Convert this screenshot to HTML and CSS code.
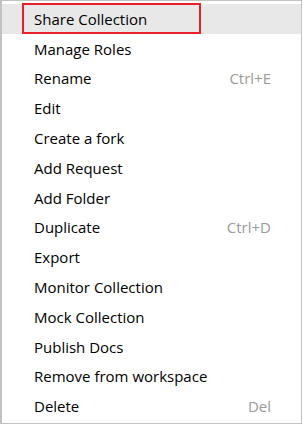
FILE: index.html
```html
<!DOCTYPE html>
<html lang="en">
<head>
    <meta charset="UTF-8">
    <title>Collection Menu</title>
    <link rel="stylesheet" href="styles.css">
</head>
<body>
    <div class="menu">
        <ul class="menu-list">
            <li class="menu-item active">
                <span>Share Collection</span>
                <div class="mark"></div>
            </li>
            <li class="menu-item"><span>Manage Roles</span></li>
            <li class="menu-item"><span>Rename</span><span class="shortcut">Ctrl+E</span></li>
            <li class="menu-item"><span>Edit</span></li>
            <li class="menu-item"><span>Create a fork</span></li>
            <li class="menu-item"><span>Add Request</span></li>
            <li class="menu-item"><span>Add Folder</span></li>
            <li class="menu-item"><span>Duplicate</span><span class="shortcut">Ctrl+D</span></li>
            <li class="menu-item"><span>Export</span></li>
            <li class="menu-item"><span>Monitor Collection</span></li>
            <li class="menu-item"><span>Mock Collection</span></li>
            <li class="menu-item"><span>Publish Docs</span></li>
            <li class="menu-item"><span>Remove from workspace</span></li>
            <li class="menu-item"><span>Delete</span><span class="shortcut">Del</span></li>
        </ul>
    </div>
</body>
</html>
```

FILE: styles.css
```css
* {
    margin: 0;
    padding: 0;
    box-sizing: border-box;
}

body {
    font-family: 'Open Sans', 'Noto Sans', sans-serif;
    background: #fff;
    color: #000;
}

.menu {
    width: 302px;
    height: 424px;
    border: 1px solid #c2c2c2;
    border-left-width: 2px;
    background: #fff;
    padding-top: 3px;
}

.menu-list {
    list-style: none;
}

.menu-item {
    position: relative;
    display: flex;
    justify-content: space-between;
    align-items: center;
    height: 29.8px;
    padding: 0 30px 0 32px;
    font-size: 15px;
}

.menu-item.active {
    background: #e8e8e8;
}

.shortcut {
    color: #9a9a9a;
}

.mark {
    position: absolute;
    left: 20px;
    top: -1px;
    width: 179px;
    height: 31px;
    border: 2px solid #e8202a;
}
```
